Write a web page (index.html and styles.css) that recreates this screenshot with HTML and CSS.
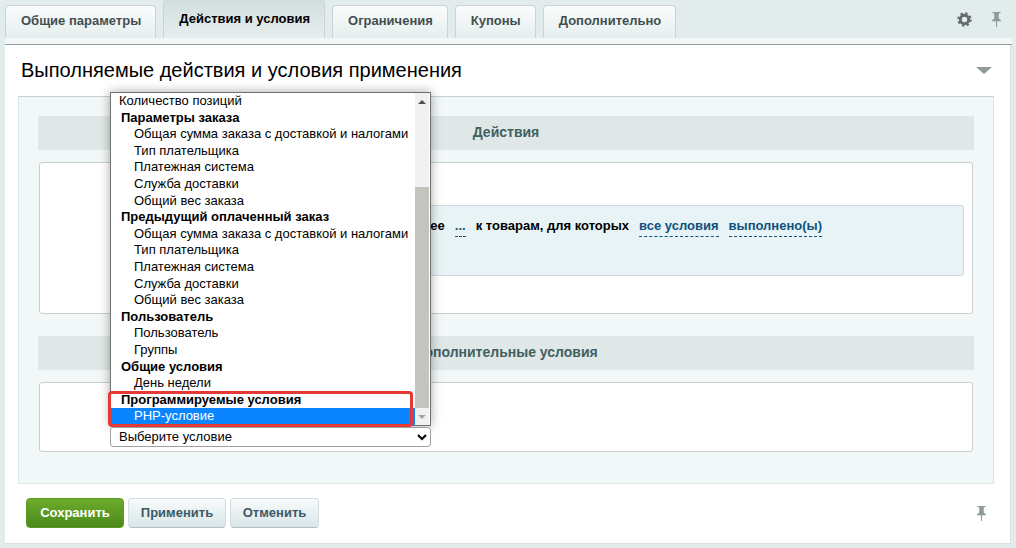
FILE: index.html
```html
<!DOCTYPE html>
<html lang="en">
<head>
  <meta charset="UTF-8">
  <meta name="viewport" content="width=device-width, initial-scale=1.0">
  <title>Выполняемые действия и условия</title>
  <link rel="stylesheet" href="styles.css">
</head>
<body>
  <div class="top">
    <div class="tabs">
      <div class="tab">Общие параметры</div>
      <div class="tab active">Действия и условия</div>
      <div class="tab">Ограничения</div>
      <div class="tab">Купоны</div>
      <div class="tab">Дополнительно</div>
    </div>
    <div class="top-icons">
      <svg width="15" height="15" viewBox="0 0 15 15"><circle cx="7.500" cy="7.500" r="4.200" fill="none" stroke="#646f6d" stroke-width="3"/><circle cx="7.500" cy="7.500" r="6.200" fill="none" stroke="#646f6d" stroke-width="2" stroke-dasharray="2.400 2.470"/></svg>
      <svg width="11" height="16" viewBox="0 0 12 18"><path d="M1.500 1h9v1.500H8.500v6l2.500 2v1H1v-1l2.500-2v-6H1.500z" fill="#8c9a98"/><path d="M6 11v7" stroke="#8c9a98" stroke-width="1.200"/></svg>
    </div>
  </div>
  <div class="strip"></div>

  <div class="panel">
    <div class="panel-head">
      <h1>Выполняемые действия и условия применения</h1>
      <div class="collapse"></div>
    </div>

    <div class="inner">
      <div class="band">Действия</div>
      <div class="card card-actions">
        <div class="rule">
          <span>ее</span>
          <span class="link">...</span>
          <span>к товарам, для которых</span>
          <span class="link">все условия</span>
          <span class="link">выполнено(ы)</span>
        </div>
      </div>
      <div class="band band-second">Дополнительные условия</div>
      <div class="card card-extra"></div>
    </div>

    <div class="footer">
      <div class="buttons">
        <button class="btn btn-save">Сохранить</button>
        <button class="btn">Применить</button>
        <button class="btn">Отменить</button>
      </div>
      <svg width="11" height="16" viewBox="0 0 12 18"><path d="M1.500 1h9v1.500H8.500v6l2.500 2v1H1v-1l2.500-2v-6H1.500z" fill="#8c9a98"/><path d="M6 11v7" stroke="#8c9a98" stroke-width="1.200"/></svg>
    </div>

    <div class="dropdown">
      <div class="list">
        <div class="rows">
          <div class="row first">Количество позиций</div>
          <div class="row group">Параметры заказа</div>
          <div class="row">Общая сумма заказа с доставкой и налогами</div>
          <div class="row">Тип плательщика</div>
          <div class="row">Платежная система</div>
          <div class="row">Служба доставки</div>
          <div class="row">Общий вес заказа</div>
          <div class="row group">Предыдущий оплаченный заказ</div>
          <div class="row">Общая сумма заказа с доставкой и налогами</div>
          <div class="row">Тип плательщика</div>
          <div class="row">Платежная система</div>
          <div class="row">Служба доставки</div>
          <div class="row">Общий вес заказа</div>
          <div class="row group">Пользователь</div>
          <div class="row">Пользователь</div>
          <div class="row">Группы</div>
          <div class="row group">Общие условия</div>
          <div class="row">День недели</div>
          <div class="row group">Программируемые условия</div>
          <div class="row selected">PHP-условие</div>
        </div>
        <div class="scrollbar">
          <div class="arrow arrow-up"></div>
          <div class="track"><div class="thumb"></div></div>
          <div class="arrow arrow-down"></div>
        </div>
      </div>
      <select class="picker"><option>Выберите условие</option></select>
      <div class="highlight"></div>
    </div>
  </div>
</body>
</html>
```

FILE: styles.css
```css
body {
  margin: 0;
  height: 548px;
  overflow: hidden;
  background-color: #e3ecec;
  font-family: "Liberation Sans", Arial, sans-serif;
  color: #000;
}

.top {
  display: flex;
  justify-content: space-between;
  height: 38px;
  padding: 0 14px 0 5px;
}

.tabs {
  display: flex;
  align-items: flex-end;
  gap: 7px;
}

.tab {
  height: 33px;
  padding: 0 14px 0 15px;
  box-sizing: border-box;
  line-height: 30px;
  font-size: 13px;
  font-weight: bold;
  color: #434f4f;
  background: linear-gradient(#fafcfc, #e6eeee);
  border: 1px solid #c9d5d5;
  border-bottom: none;
  border-radius: 4px 4px 0 0;
}

.tab.active {
  height: 38px;
  line-height: 38px;
  color: #000;
  background: linear-gradient(#d2dedd, #e6eeee);
  border-top: none;
}

.top-icons {
  display: flex;
  align-items: center;
  gap: 19px;
  height: 38px;
}

.strip {
  width: 1007px;
  height: 6px;
  margin-left: 5px;
  background-color: #f3f7f7;
  border-bottom: 1px solid #8e9d9b;
}

.panel {
  position: relative;
  width: 1006px;
  height: 499px;
  margin-left: 5px;
  box-sizing: border-box;
  background-color: #fff;
  border-right: 1px solid #d6e0e0;
  border-bottom: 1px solid #d6e0e0;
}

.panel-head {
  display: flex;
  justify-content: space-between;
  align-items: center;
  height: 51px;
  padding: 0 18px 0 16px;
}

h1 {
  margin: 0;
  font-size: 20px;
  font-weight: normal;
}

.collapse {
  width: 0;
  height: 0;
  border-left: 8px solid transparent;
  border-right: 8px solid transparent;
  border-top: 7px solid #8f9c9a;
}

.inner {
  width: 976px;
  height: 388px;
  margin-left: 13px;
  padding: 19px;
  box-sizing: border-box;
  background-color: #f2f7f7;
  border: 1px solid #dbe6e8;
  border-top-color: #c3d1d0;
}

.band {
  height: 34px;
  line-height: 33px;
  text-align: center;
  font-size: 14px;
  font-weight: bold;
  color: #416060;
  background-color: #e0e8e7;
}

.band-second {
  margin-top: 22px;
}

.card {
  margin: 12px 1px 0;
  box-sizing: border-box;
  background-color: #fff;
  border: 1px solid #c9cfcf;
  border-radius: 3px;
}

.card-actions {
  height: 152px;
  padding: 42px 8px 0 80px;
}

.card-extra {
  height: 70px;
}

.rule {
  display: flex;
  justify-content: flex-end;
  gap: 10px;
  height: 71px;
  padding: 12px 141px 0 0;
  box-sizing: border-box;
  font-size: 13px;
  font-weight: bold;
  background-color: #e8f3f5;
  border: 1px solid #cfd8d8;
  border-radius: 3px;
}

.link {
  height: 18px;
  color: #0f5280;
  border-bottom: 1px dashed #0f5280;
}

.footer {
  display: flex;
  justify-content: space-between;
  align-items: center;
  height: 58px;
  padding: 0 23px 0 21px;
}

.buttons {
  display: flex;
  gap: 4px;
}

.btn {
  height: 30px;
  padding: 0 11.8px 2px;
  font-family: inherit;
  font-size: 13px;
  font-weight: bold;
  color: #3c5a66;
  background: linear-gradient(#f8fbfb, #dae5e8);
  border: 1px solid #d4dddf;
  border-bottom-color: #b3bfc2;
  border-radius: 4px;
}

.btn-save {
  width: 98px;
  color: #fff;
  background: linear-gradient(#6cab2a, #4b8a1c);
  border-color: #5a9a22;
}

/* open select list, lies over the panel */
.dropdown {
  position: absolute;
  left: 105px;
  top: 47px;
  width: 321px;
}

.list {
  display: flex;
  height: 334px;
  box-sizing: border-box;
  background-color: #fff;
  border: 1px solid #6f6f6f;
  box-shadow: 0 0 10px rgba(0, 0, 0, 0.35);
}

.rows {
  flex: 1;
  overflow: hidden;
  font-size: 13px;
}

.row {
  height: 16.6px;
  line-height: 16.6px;
  padding-left: 23px;
  white-space: nowrap;
}

.row.first {
  padding-left: 8px;
}

.row.group {
  padding-left: 10px;
  font-weight: bold;
}

.row.selected {
  color: #fff;
  background-color: #0a84ff;
}

.scrollbar {
  display: flex;
  flex-direction: column;
  width: 14px;
  margin-right: 1px;
  background-color: #f1f1f1;
}

.track {
  flex: 1;
  padding-top: 77px;
}

.thumb {
  height: 221px;
  background-color: #c5c3bd;
}

.arrow {
  height: 17px;
  display: flex;
  align-items: center;
  justify-content: center;
}

.arrow::after {
  content: "";
  border-left: 4px solid transparent;
  border-right: 4px solid transparent;
}

.arrow-up::after {
  border-bottom: 4px solid #505050;
}

.arrow-down::after {
  border-top: 4px solid #a3a3a3;
}

.picker {
  display: block;
  width: 321px;
  height: 20px;
  margin-top: 1px;
  padding: 0 4px 1px;
  font-family: inherit;
  font-size: 13px;
  color: #000;
  background-color: #fff;
  border: 1px solid #a0a0a0;
  border-radius: 3px;
}

.highlight {
  position: absolute;
  left: -2px;
  top: 299px;
  width: 305px;
  height: 36px;
  box-sizing: border-box;
  border: 3px solid #e53935;
  border-radius: 4px;
}
```
